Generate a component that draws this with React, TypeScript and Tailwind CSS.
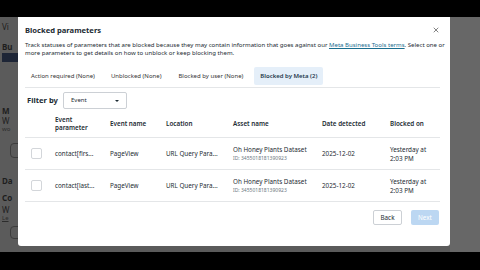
import { X } from "lucide-react"

const cols = "grid grid-cols-[30px_55px_56px_67px_89px_68px_50px] items-center"

const rows = [
  { param: "contact[firs...", id: "ID: 3455018181390923" },
  { param: "contact[last...", id: "ID: 3455018181390923" },
]

function PageStrip() {
  return (
    <div className="relative w-[18px] shrink-0 overflow-hidden bg-[#5b5b5b] text-[#1e1e1e] text-[8px] leading-[9px]">
      <div className="pl-[2px] pt-[5px]">Vi</div>
      <div className="pl-[2px] pt-[11px] font-bold">Bu</div>
      <div className="ml-[2px] mt-[2px] h-[9px] w-[20px] bg-[#1d2536]" />
      <div className="pl-[2px] pt-[44px] font-bold">M</div>
      <div className="pl-[2px] pt-[1px]">W</div>
      <div className="pl-[2px] text-[6px] text-[#2c2c2c]">wo</div>
      <div className="ml-[10px] mt-[9px] h-[15px] w-[20px] rounded-sm border border-[#3d3d3d]" />
      <div className="pl-[2px] pt-[18px] font-bold">Da</div>
      <div className="pl-[2px] pt-[8px] font-bold">Co</div>
      <div className="pl-[2px] pt-[3px]">W</div>
      <div className="pl-[2px] text-[6px] text-[#2c2c2c] underline">Le</div>
      <div className="ml-[10px] mt-[3px] h-[13px] w-[20px] rounded-sm border border-[#3d3d3d]" />
    </div>
  )
}

export default function App() {
  return (
    <div
      className="flex h-[270px] w-[480px] flex-col bg-black text-[#1c2b33]"
      style={{ fontFamily: '"Noto Sans", "Liberation Sans", sans-serif' }}
    >
      <div className="h-[17px] shrink-0" />
      <div className="flex h-[235px] shrink-0">
        <PageStrip />
        {/* Modal */}
        <div className="flex w-[432px] shrink-0 flex-col bg-[#5b5b5b]">
          <div className="flex h-[229px] flex-col rounded-b-[3px] bg-white pl-[7px] pr-[4px] pt-[7px]">
            <div className="flex items-center justify-between pr-[6px]">
              <div className="text-[7.6px] font-bold leading-[12px]">Blocked parameters</div>
              <X className="h-[8px] w-[8px] text-[#444]" strokeWidth={2} />
            </div>
            <p className="mt-[5px] text-[6.05px] leading-[8px] text-[#1c2b33]">
              Track statuses of parameters that are blocked because they may contain information that goes against our <a className="text-[#1b6e8f] underline">Meta Business Tools terms</a>. Select one or more parameters to get details on how to unblock or keep blocking them.
            </p>
            <div className="mr-[6px] mt-[10px] flex items-center border-b border-[#e4e6e8] pb-[2px] text-[6px] leading-[18px] text-[#333]">
              <div className="px-[6px]">Action required (None)</div>
              <div className="ml-[4px] px-[6px]">Unblocked (None)</div>
              <div className="ml-[5px] px-[6px]">Blocked by user (None)</div>
              <div className="ml-[5px] rounded-[2px] bg-[#e5eff9] px-[6px] font-semibold text-[#23374a]">Blocked by Meta (2)</div>
            </div>
            <div className="mt-[4px] flex items-center">
              <div className="ml-[2px] w-[36px] text-[7.6px] font-bold">Filter by</div>
              <div className="flex h-[17px] w-[64px] items-center justify-between rounded-[2px] border border-[#ccd0d5] pl-[7px] pr-[7px] text-[6px]">
                <span>Event</span>
                <span className="h-0 w-0 border-x-[2.5px] border-t-[2.5px] border-x-transparent border-t-[#1c2b33]" />
              </div>
            </div>
            <div className="mr-[6px] mt-[2px] text-[6.3px]">
              <div className={`${cols} h-[27px] border-b border-[#e4e6e8] font-semibold leading-[8px]`}>
                <div />
                <div>Event<br />parameter</div>
                <div>Event name</div>
                <div>Location</div>
                <div>Asset name</div>
                <div>Date detected</div>
                <div>Blocked on</div>
              </div>
              {rows.map((r) => (
                <div key={r.param} className={`${cols} h-[32px] border-b border-[#e4e6e8] leading-[9px]`}>
                  <div className="pl-[6px]">
                    <div className="h-[11px] w-[11px] rounded-[2px] border border-[#d3d6da]" />
                  </div>
                  <div>{r.param}</div>
                  <div>PageView</div>
                  <div>URL Query Para...</div>
                  <div>
                    <div>Oh Honey Plants Dataset</div>
                    <div className="text-[5px] text-[#6b7780]">{r.id}</div>
                  </div>
                  <div>2025-12-02</div>
                  <div>Yesterday at<br />2:03 PM</div>
                </div>
              ))}
            </div>
            <div className="mr-[7px] mt-[8px] flex justify-end gap-[9px] text-[6.3px]">
              <div className="flex h-[15px] w-[29px] items-center justify-center rounded-[2px] border border-[#ccd0d5]">Back</div>
              <div className="flex h-[15px] w-[28px] items-center justify-center rounded-[2px] bg-[#bcd7f2] text-white">Next</div>
            </div>
          </div>
        </div>
        <div className="flex-1 bg-[#676767]" />
      </div>
    </div>
  )
}
